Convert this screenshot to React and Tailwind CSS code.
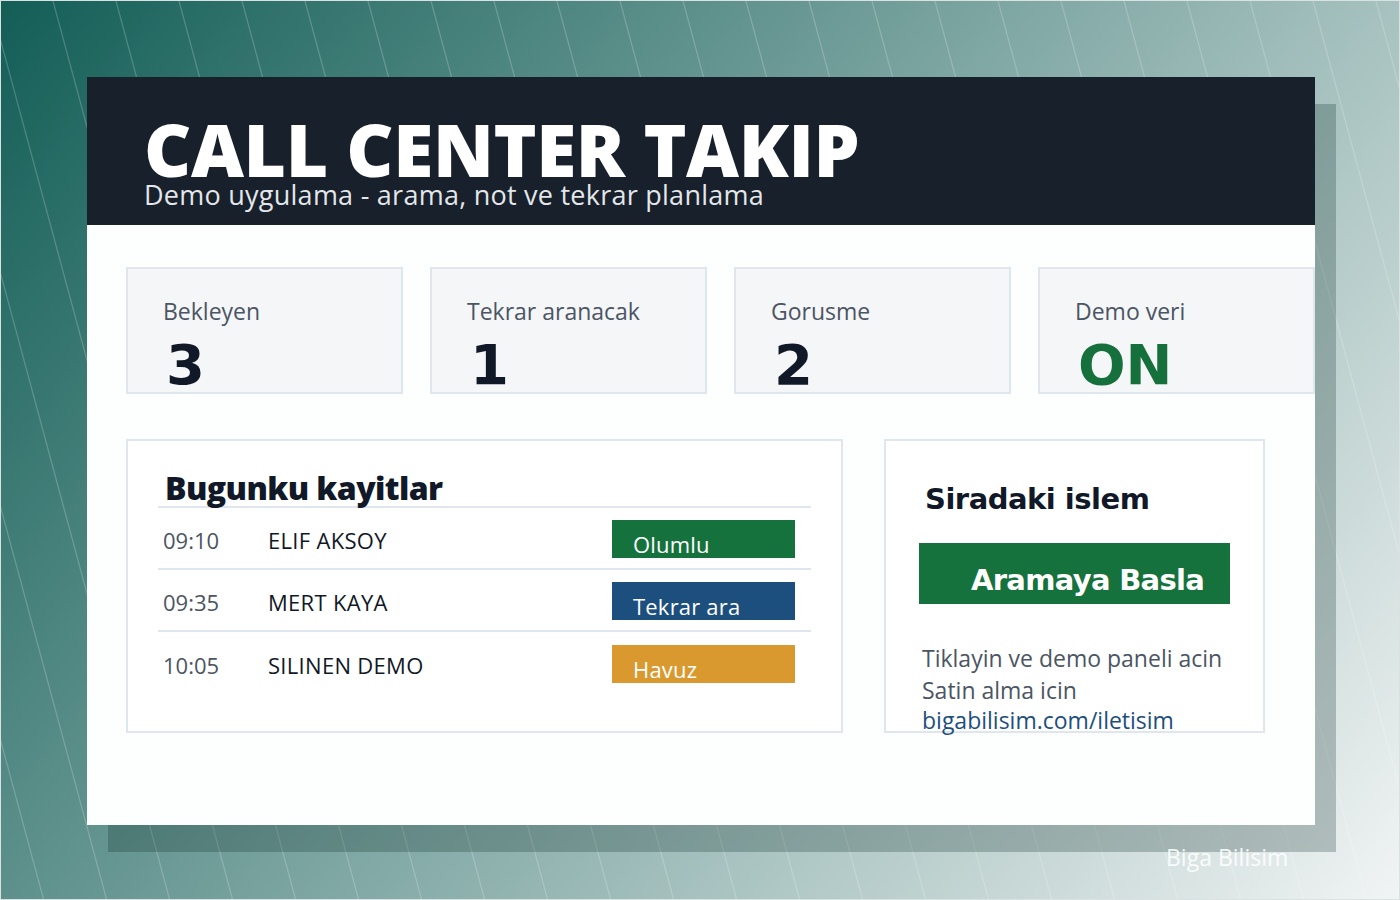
import React from 'react';

const stats = [
  { label: 'Bekleyen', value: '3', color: 'text-[#111827]' },
  { label: 'Tekrar aranacak', value: '1', color: 'text-[#111827]' },
  { label: 'Gorusme', value: '2', color: 'text-[#111827]' },
  { label: 'Demo veri', value: 'ON', color: 'text-[#16703c]' },
];

const rows = [
  { time: '09:10', name: 'ELIF AKSOY', status: 'Olumlu', badge: 'bg-[#16723d]' },
  { time: '09:35', name: 'MERT KAYA', status: 'Tekrar ara', badge: 'bg-[#1d4f7e]' },
  { time: '10:05', name: 'SILINEN DEMO', status: 'Havuz', badge: 'bg-[#da992e]' },
];

// diagonal hairlines of the backdrop
const lines = Array.from({ length: 30 }, (_, k) => -326 + 63 * k);

export default function App() {
  return (
    <div className="relative w-full h-[900px] overflow-hidden border border-[#d9e2e1] bg-[linear-gradient(128deg,#135e57,#f1f4f4)] pl-[86px] pt-[76px] font-['Open_Sans',sans-serif]">
      <svg className="absolute inset-0" width="1400" height="900">
        {lines.map((x) => (
          <line key={x} x1={x} y1="0" x2={x + 243} y2="900" stroke="white" strokeOpacity="0.2" strokeWidth="1.3" />
        ))}
      </svg>
      <div className="relative w-[1228px] h-[748px]">
        <div className="absolute left-[21px] top-[27px] w-[1228px] h-[748px] bg-[#0b2a28]/25" />
        <div className="relative w-full h-full bg-[#fdfefe] flex flex-col">
          <header className="h-[148px] bg-[#17202b] pl-[57px] pt-[36px]">
            <h1 className="text-white text-[73px] leading-[72px] font-extrabold tracking-[-0.4px]">CALL CENTER TAKIP</h1>
            <p className="text-[#e3e7ea] text-[27px] leading-[28px] tracking-[0.25px] -mt-[4px]">Demo uygulama - arama, not ve tekrar planlama</p>
          </header>

          <div className="pl-[39px] pt-[42px]">
            <div className="flex gap-[27px]">
              {stats.map((s) => (
                <div key={s.label} className="w-[277px] h-[127px] bg-[#f5f6f8] border-2 border-[#dfe6ed] pl-[35px] pt-[27px]">
                  <div className="text-[23px] leading-[30px] text-[#4b5564]">{s.label}</div>
                  <div className={`text-[56px] leading-[60px] font-['DejaVu_Sans',sans-serif] font-bold ml-[3px] mt-[9px] ${s.color}`}>{s.value}</div>
                </div>
              ))}
            </div>

            <div className="flex gap-[41px] mt-[45px]">
              <section className="w-[717px] h-[294px] bg-white border-2 border-[#dfe6ed] px-[30px] pt-[29px]">
                <h2 className="ml-[7px] text-[32px] leading-[36px] font-extrabold text-[#111827] tracking-[-0.6px]">Bugunku kayitlar</h2>
                <div className="border-t-2 border-[#dfe6ee] w-[653px]">
                  {rows.map((r, i) => (
                    <div key={r.time} className={`h-[62px] flex items-center ${i < 2 ? 'border-b-2 border-[#dfe6ee]' : ''}`}>
                      <span className="w-[110px] pl-[5px] mt-[5px] text-[22px] text-[#4b5564]">{r.time}</span>
                      <span className="flex-1 mt-[5px] text-[22px] tracking-[0.3px] text-[#111827]">{r.name}</span>
                      <span className={`w-[183px] h-[38px] mr-[16px] mt-[2px] pl-[21px] pt-[10px] text-[22px] leading-[28px] tracking-[0.2px] text-white ${r.badge}`}>{r.status}</span>
                    </div>
                  ))}
                </div>
              </section>

              <section className="w-[381px] h-[294px] bg-white border-2 border-[#dfe6ed] pl-[33px] pt-[38px]">
                <h2 className="ml-[6px] text-[29px] leading-[40px] font-bold text-[#111827] font-['DejaVu_Sans',sans-serif] tracking-[-0.5px]">Siradaki islem</h2>
                <button className="mt-[24px] w-[311px] h-[61px] bg-[#16723d] text-white text-[29px] font-bold font-['DejaVu_Sans',sans-serif] tracking-[-0.7px] pl-[52px] pt-[15px] text-left">Aramaya Basla</button>
                <div className="mt-[38px] ml-[3px] text-[23px] leading-[32px] text-[#4b5564]">
                  <div>Tiklayin ve demo paneli acin</div>
                  <div>Satin alma icin</div>
                  <div className="text-[#1d4f7e] font-medium -mt-[2px]">bigabilisim.com/iletisim</div>
                </div>
              </section>
            </div>
          </div>
        </div>
      </div>
      <div className="absolute left-[1165px] top-[839px] text-[23px] text-white/85">Biga Bilisim</div>
    </div>
  );
}
